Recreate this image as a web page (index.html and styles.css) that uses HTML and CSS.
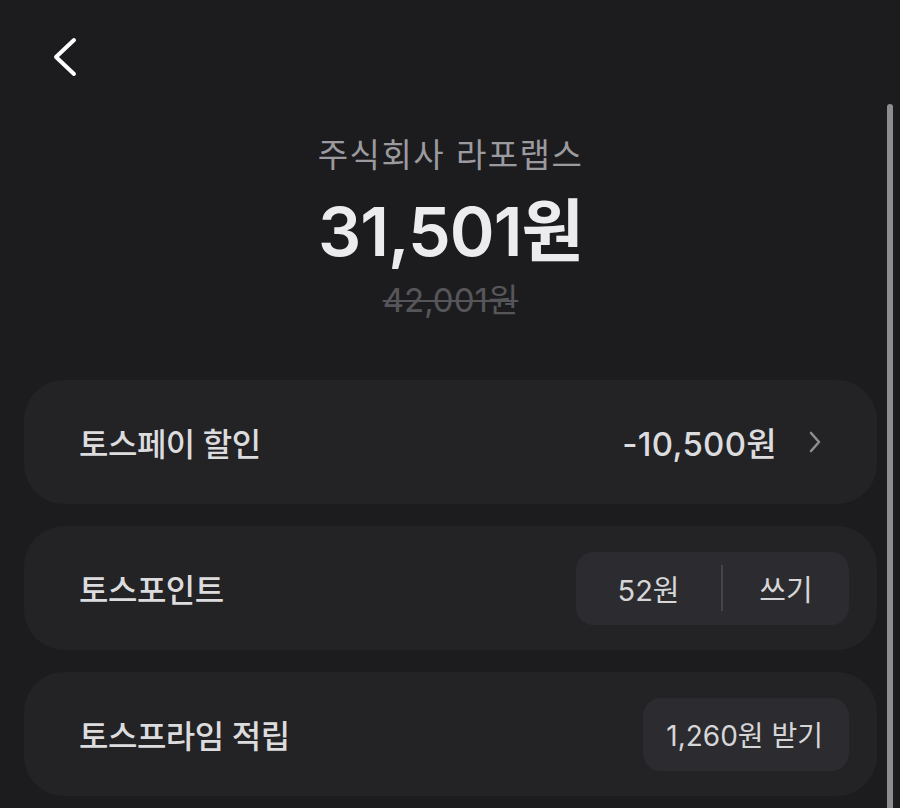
FILE: index.html
```html
<!DOCTYPE html>
<html lang="ko">
<head>
    <meta charset="UTF-8">
    <title>결제</title>
    <link rel="stylesheet" href="styles.css">
</head>
<body>
    <div class="screen">
        <!-- Top bar with back button -->
        <div class="topbar">
            <button class="back-btn" aria-label="뒤로">
                <svg width="30" height="44" viewBox="0 0 30 44">
                    <path d="M23 5 L5 22 L23 39" fill="none" stroke="#ffffff" stroke-width="4" stroke-linecap="round" stroke-linejoin="round"/>
                </svg>
            </button>
        </div>

        <!-- Merchant and price -->
        <div class="summary">
            <div class="merchant">주식회사 라포랩스</div>
            <div class="price">31,501원</div>
            <div class="price-old">42,001원</div>
        </div>

        <!-- Benefit rows -->
        <div class="rows">
            <div class="row">
                <div class="row-label">토스페이 할인</div>
                <div class="row-right">
                    <span class="discount">-10,500원</span>
                    <svg class="chevron" width="16" height="24" viewBox="0 0 16 24">
                        <path d="M4 3 L12 12 L4 21" fill="none" stroke="#8c8c90" stroke-width="2.6" stroke-linecap="round" stroke-linejoin="round"/>
                    </svg>
                </div>
            </div>

            <div class="row">
                <div class="row-label">토스포인트</div>
                <div class="pill pill-split">
                    <span class="pill-part">52원</span>
                    <span class="pill-divider"></span>
                    <span class="pill-part">쓰기</span>
                </div>
            </div>

            <div class="row">
                <div class="row-label">토스프라임 적립</div>
                <div class="pill">1,260원 받기</div>
            </div>
        </div>

        <div class="scrollbar"></div>
    </div>
</body>
</html>
```

FILE: styles.css
```css
body {
    margin: 0;
    padding: 0;
    background-color: #1c1c1f;
    font-family: Inter, "Noto Sans CJK KR", "Noto Sans", sans-serif;
    color: #e4e4e6;
}

.screen {
    position: relative;
    height: 808px;
    overflow: hidden;
    padding: 0 23px 0 24px;
}

.topbar {
    height: 135px;
    padding-top: 35px;
    box-sizing: border-box;
}

.back-btn {
    background: none;
    border: 0;
    padding: 0;
    margin-left: 27px;
    display: block;
    cursor: pointer;
}

.summary {
    text-align: center;
}

.merchant {
    font-size: 33px;
    line-height: 40px;
    color: #9b9b9f;
    font-weight: 400;
    letter-spacing: 1.5px;
}

.price {
    margin-top: 20px;
    font-size: 68px;
    line-height: 72px;
    font-weight: 600;
    color: #ececee;
    letter-spacing: -1px;
}

.price-old {
    margin-top: 15px;
    font-size: 33px;
    line-height: 36px;
    color: #56565a;
    text-decoration: line-through;
    text-decoration-thickness: 2px;
}

.rows {
    margin-top: 62px;
    display: flex;
    flex-direction: column;
    gap: 22px;
}

.row {
    background-color: #232326;
    border-radius: 40px;
    height: 124px;
    display: flex;
    align-items: center;
    justify-content: space-between;
    padding: 0 28px 0 55px;
}

.row:first-child {
    padding-right: 54px;
}

.row-label {
    font-size: 32px;
    font-weight: 500;
    color: #dcdcde;
    letter-spacing: -0.5px;
}

.row-right {
    display: flex;
    align-items: center;
    gap: 30px;
}

.discount {
    font-size: 33px;
    font-weight: 500;
    color: #dcdcde;
    letter-spacing: 0.3px;
}

.chevron {
    display: block;
}

.pill {
    background-color: #2c2c30;
    border-radius: 18px;
    height: 73px;
    display: flex;
    align-items: center;
    padding: 0 26px 0 23px;
    font-size: 28px;
    color: #d6d6d8;
}

.pill-split {
    padding: 0;
    font-size: 29px;
}

.pill-part {
    width: 145px;
    text-align: center;
}

.pill-split .pill-part:last-child {
    width: 126px;
}

.pill-divider {
    width: 2px;
    height: 46px;
    background-color: #44444a;
}

.scrollbar {
    position: absolute;
    top: 104px;
    right: 7px;
    width: 6px;
    height: 720px;
    border-radius: 3px;
    background-color: #8e8e92;
}
```
